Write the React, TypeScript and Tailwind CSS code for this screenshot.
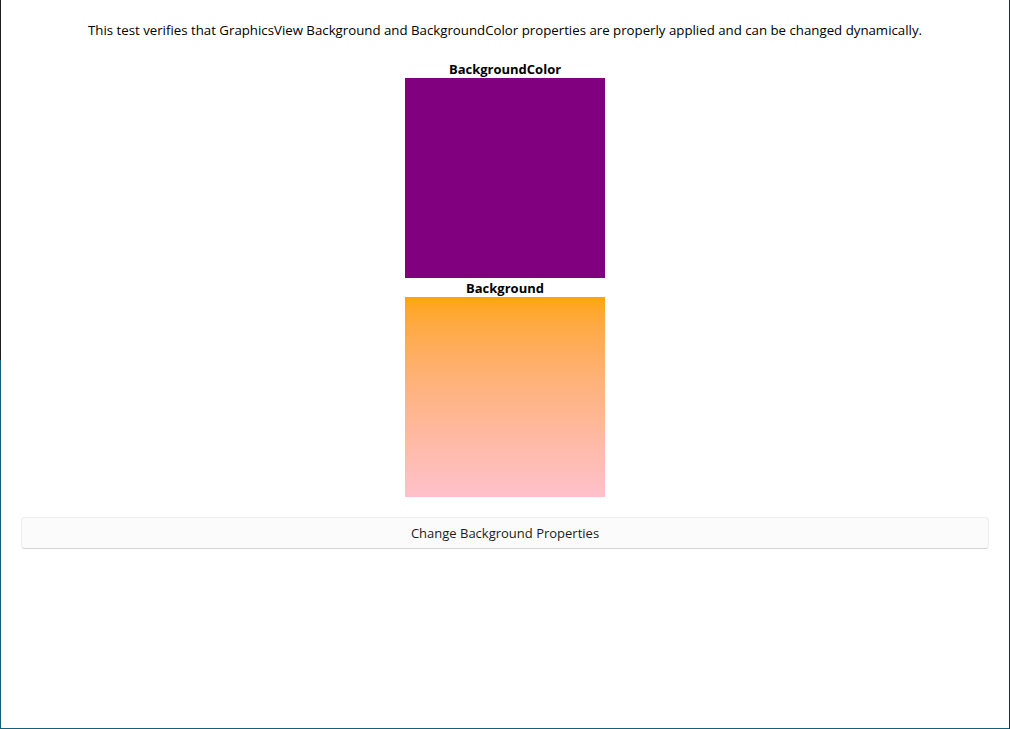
export default function App() {
  return (
    <div
      className="flex h-[729px] w-[1010px] overflow-hidden bg-white text-black"
      style={{ fontFamily: '"Open Sans", "Noto Sans", sans-serif' }}
    >
      {/* left window edge */}
      <div className="flex w-px flex-col">
        <div className="h-[360px] bg-[#1e1e1e]" />
        <div className="flex-1 bg-[#14607c]" />
      </div>

      <div className="flex flex-1 flex-col border-b border-[#14607c]">
        <p className="mt-[20px] h-[20px] text-center text-[13.25px] leading-[20px]">
          This test verifies that GraphicsView Background and BackgroundColor properties are properly applied and can be changed dynamically.
        </p>

        <div className="mt-[19px] flex flex-col items-center">
          <div className="h-[19px] pt-px text-[13px] font-bold leading-[18px]">BackgroundColor</div>
          <div className="h-[200px] w-[200px] bg-[#800080]" />
          <div className="h-[19px] pt-px text-[13px] font-bold leading-[18px]">Background</div>
          <div className="h-[200px] w-[200px] bg-gradient-to-b from-[#ffa500] to-[#ffc0cb]" />
        </div>

        <div className="mt-[20px] px-[20px]">
          <button className="flex h-[32px] w-full items-center justify-center rounded-[4px] border border-[#ececec] border-b-[#d4d4d4] bg-[#fbfbfb] pt-px text-[13px] text-[#1b1b1b]">
            Change Background Properties
          </button>
        </div>
      </div>

      {/* right window edge */}
      <div className="w-px bg-[#1c3050]" />
    </div>
  );
}
